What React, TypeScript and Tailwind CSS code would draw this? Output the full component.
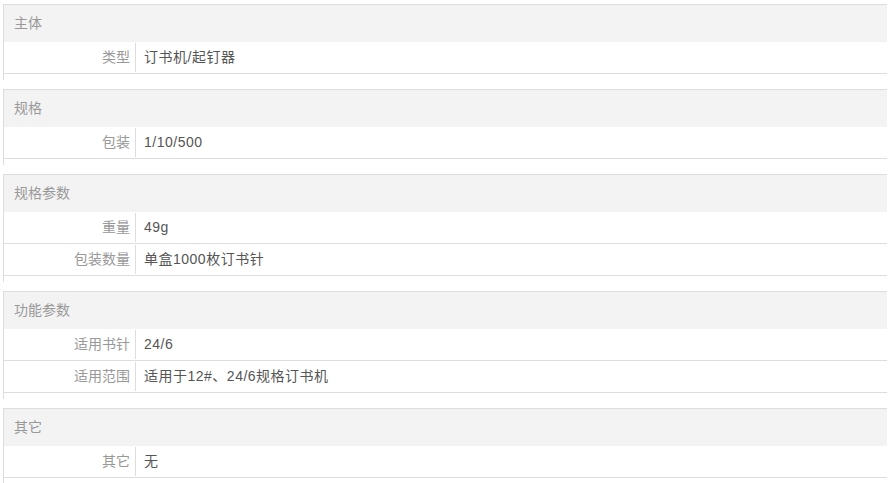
import React from "react";

type Section = { title: string; rows: [string, string][] };

const data: Section[] = [
  { title: "主体", rows: [["类型", "订书机/起钉器"]] },
  { title: "规格", rows: [["包装", "1/10/500"]] },
  {
    title: "规格参数",
    rows: [
      ["重量", "49g"],
      ["包装数量", "单盒1000枚订书针"],
    ],
  },
  {
    title: "功能参数",
    rows: [
      ["适用书针", "24/6"],
      ["适用范围", "适用于12#、24/6规格订书机"],
    ],
  },
  { title: "其它", rows: [["其它", "无"]] },
];

export default function App() {
  return (
    <div
      className="w-[893px] h-[483px] bg-white overflow-hidden pt-[4px] pl-[3px]"
      style={{ fontFamily: '"Liberation Sans", "Noto Sans CJK SC", sans-serif' }}
    >
      <div className="w-[884px] flex flex-col gap-[9px]">
        {data.map((s) => (
          <div key={s.title} className="border-t border-l border-[#dddddd] pb-[6px]">
            <div className="h-[37px] bg-[#f3f3f3] flex items-center pl-[10px] text-[14px] text-[#999999]">
              {s.title}
            </div>
            {s.rows.map(([k, v]) => (
              <div key={k} className="h-[32px] flex border-b border-[#dddddd] bg-white">
                <div className="w-[131px] shrink-0 flex items-center justify-end pr-[5px] text-[14px] text-[#999999]">
                  {k}
                </div>
                <div className="my-[1px] border-l border-[#dddddd]" />
                <div className="flex items-center pl-[8px] text-[14px] tracking-[0.5px] text-[#555555]">
                  {v}
                </div>
              </div>
            ))}
          </div>
        ))}
      </div>
    </div>
  );
}
